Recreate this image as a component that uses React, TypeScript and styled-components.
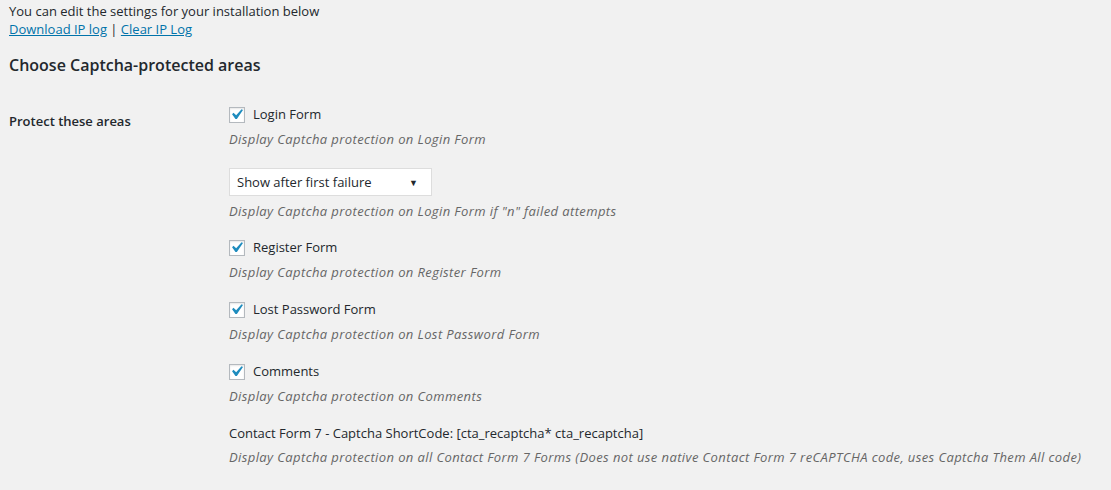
import React from 'react';
import styled, { createGlobalStyle } from 'styled-components';

const GlobalStyle = createGlobalStyle`
    html, body {
        margin: 0;
        padding: 0;
        background: #f1f1f1;
    }
    body {
        font-family: "Open Sans", "Noto Sans", sans-serif;
        font-size: 13px;
        color: #23282d;
    }
`;

const Page = styled.div`
    padding: 2px 9px 0 9px;
    width: 1111px;
    height: 490px;
    box-sizing: border-box;
    overflow: hidden;
`;

const Intro = styled.p`
    margin: 0;
    line-height: 18px;
    font-size: 13px;
`;

const Link = styled.a`
    color: #0073aa;
    text-decoration: underline;
`;

const Heading = styled.h2`
    margin: 15px 0 0 0;
    font-size: 16px;
    font-weight: 600;
    line-height: 24px;
    color: #23282d;
`;

const FormTable = styled.div`
    display: grid;
    grid-template-columns: 220px 1fr;
    margin-top: 27px;
`;

const RowLabel = styled.div`
    font-weight: 600;
    font-size: 13px;
    line-height: 20px;
    padding-top: 7px;
`;

const Fields = styled.div`
    display: flex;
    flex-direction: column;
    gap: 17px;
`;

const Field = styled.div<{ $gap?: number; $after?: number }>`
    display: flex;
    flex-direction: column;
    gap: ${p => p.$gap ?? 5}px;
    margin-bottom: ${p => p.$after ?? 0}px;
`;

const CheckLine = styled.label`
    display: flex;
    align-items: center;
    gap: 8px;
    line-height: 20px;
    font-size: 13px;
`;

const Box = styled.span`
    width: 16px;
    height: 16px;
    box-sizing: border-box;
    border: 1px solid #b4b9be;
    background: #fff;
    box-shadow: inset 0 1px 2px rgba(0, 0, 0, 0.1);
    display: flex;
    align-items: center;
    justify-content: center;
    overflow: visible;
    margin-top: 1px;

    svg {
        flex: none;
        margin: -3px -3px -3px -4px;
    }
`;

const Description = styled.p`
    margin: 0;
    font-style: italic;
    color: #666;
    line-height: 20px;
    font-size: 13px;
    letter-spacing: 0.4px;
`;

const SelectBox = styled.div`
    width: 203px;
    height: 28px;
    box-sizing: border-box;
    border: 1px solid #ddd;
    background: #fff;
    display: flex;
    align-items: center;
    justify-content: space-between;
    padding: 0 13px 0 7px;
    font-size: 13px;
    margin-top: 14px;
`;

const Arrow = styled.span`
    font-size: 9px;
    color: #23282d;
`;

const PlainLine = styled.div`
    line-height: 20px;
    font-size: 13px;
`;

const Check: React.FC = () => (
    <Box>
        <svg width="21" height="21" viewBox="0 0 20 20">
            <path d="M14.83 4.89l1.34.94-5.81 8.38H9.02L5.78 9.67l1.34-1.25 2.57 2.4z" fill="#1e8cbe" />
        </svg>
    </Box>
);

const CheckField: React.FC<{ label: string; desc: string }> = ({ label, desc }) => (
    <Field>
        <CheckLine>
            <Check />
            {label}
        </CheckLine>
        <Description>{desc}</Description>
    </Field>
);

const App: React.FC = () => {
    return (
        <Page>
            <GlobalStyle />
            <Intro>You can edit the settings for your installation below</Intro>
            <Intro>
                <Link href="#">Download IP log</Link> | <Link href="#">Clear IP Log</Link>
            </Intro>
            <Heading>Choose Captcha-protected areas</Heading>
            <FormTable>
                <RowLabel>Protect these areas</RowLabel>
                <Fields>
                    <Field $after={-1}>
                        <CheckLine>
                            <Check />
                            Login Form
                        </CheckLine>
                        <Description>Display Captcha protection on Login Form</Description>
                        <SelectBox>
                            <span>Show after first failure</span>
                            <Arrow>▼</Arrow>
                        </SelectBox>
                        <Description>Display Captcha protection on Login Form if "n" failed attempts</Description>
                    </Field>
                    <CheckField label="Register Form" desc="Display Captcha protection on Register Form" />
                    <CheckField label="Lost Password Form" desc="Display Captcha protection on Lost Password Form" />
                    <CheckField label="Comments" desc="Display Captcha protection on Comments" />
                    <Field $gap={4}>
                        <PlainLine>Contact Form 7 - Captcha ShortCode: [cta_recaptcha* cta_recaptcha]</PlainLine>
                        <Description>
                            Display Captcha protection on all Contact Form 7 Forms (Does not use native Contact Form 7 reCAPTCHA code, uses Captcha Them All code)
                        </Description>
                    </Field>
                </Fields>
            </FormTable>
        </Page>
    );
};

export default App;
